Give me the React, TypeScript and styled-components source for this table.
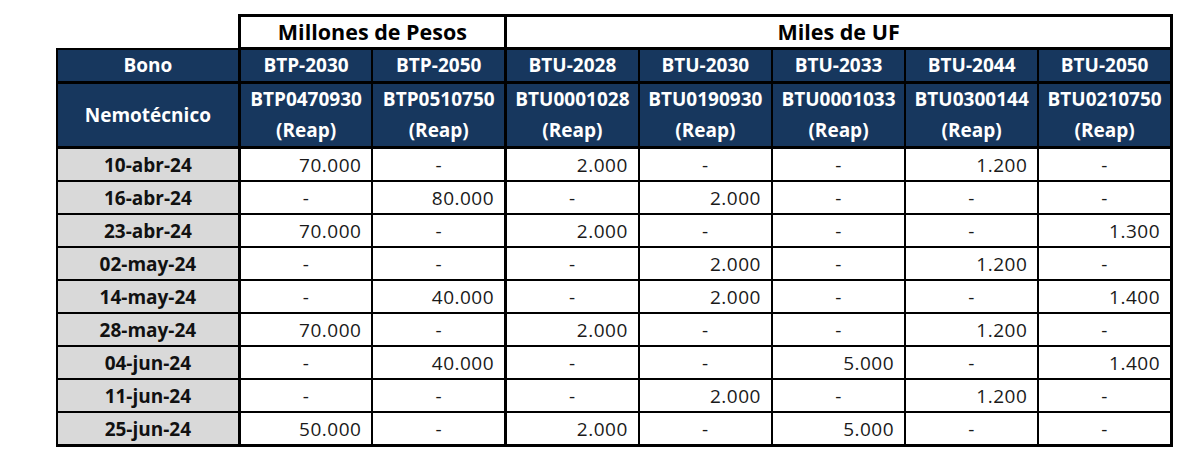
import React from "react";
import styled, { createGlobalStyle } from "styled-components";

const GlobalStyle = createGlobalStyle`
  html, body {
    margin: 0;
    padding: 0;
    background: #ffffff;
  }
  body {
    font-family: "Open Sans", "Liberation Sans", sans-serif;
  }
`;

const BLUE = "#17375e";
const GREY = "#d9d9d9";

const Page = styled.div`
  width: 1198px;
  height: 471px;
  padding: 14px 0 0 56px;
  box-sizing: border-box;
  background: #fff;
`;

const Table = styled.table`
  border-collapse: collapse;
  table-layout: fixed;
  width: 1117px;
  font-family: "Open Sans", "Liberation Sans", sans-serif;
`;

const BlankCell = styled.td`
  border: none;
  background: #fff;
  height: 30px;
  padding: 0;
`;

const GroupCell = styled.th`
  height: 30px;
  padding: 0;
  background: #fff;
  color: #000;
  font-size: 21.5px;
  font-weight: 700;
  text-align: center;
  border: 3px solid #000;
  line-height: 30px;
`;

const HeadCell = styled.th<{ $tall?: boolean; $thickRight?: boolean }>`
  height: ${(p) => (p.$tall ? "57px" : "31px")};
  padding: 0;
  background: ${BLUE};
  color: #fff;
  font-size: 19px;
  font-weight: 700;
  text-align: center;
  vertical-align: middle;
  line-height: 31px;
  border-top: 2px solid #000;
  border-bottom: 3px solid #000;
  border-left: 2px solid #000;
  border-right: ${(p) => (p.$thickRight ? "3px" : "2px")} solid #000;
  white-space: nowrap;
`;

const DateCell = styled.td<{ $last?: boolean }>`
  height: 31px;
  padding: 0;
  background: ${GREY};
  color: #111;
  font-size: 19px;
  font-weight: 700;
  text-align: center;
  border-left: 2px solid #000;
  border-right: 3px solid #000;
  border-top: 2px solid #000;
  border-bottom: ${(p) => (p.$last ? "3px" : "2px")} solid #000;
`;

const ValueCell = styled.td<{ $dash: boolean; $thickRight?: boolean; $last?: boolean; $edge?: boolean }>`
  height: 31px;
  padding: 0 10px 0 0;
  background: #fff;
  color: #1a1a1a;
  font-size: 19px;
  font-weight: 400;
  letter-spacing: 0.5px;
  text-align: ${(p) => (p.$dash ? "center" : "right")};
  padding-left: ${(p) => (p.$dash ? "10px" : "0")};
  border-top: 2px solid #000;
  border-bottom: ${(p) => (p.$last ? "3px" : "2px")} solid #000;
  border-left: 2px solid #000;
  border-right: ${(p) => (p.$thickRight || p.$edge ? "3px" : "2px")} solid #000;
`;

const bonos = ["BTP-2030", "BTP-2050", "BTU-2028", "BTU-2030", "BTU-2033", "BTU-2044", "BTU-2050"];
const nemos = [
  "BTP0470930",
  "BTP0510750",
  "BTU0001028",
  "BTU0190930",
  "BTU0001033",
  "BTU0300144",
  "BTU0210750",
];

const rows: [string, string[]][] = [
  ["10-abr-24", ["70.000", "-", "2.000", "-", "-", "1.200", "-"]],
  ["16-abr-24", ["-", "80.000", "-", "2.000", "-", "-", "-"]],
  ["23-abr-24", ["70.000", "-", "2.000", "-", "-", "-", "1.300"]],
  ["02-may-24", ["-", "-", "-", "2.000", "-", "1.200", "-"]],
  ["14-may-24", ["-", "40.000", "-", "2.000", "-", "-", "1.400"]],
  ["28-may-24", ["70.000", "-", "2.000", "-", "-", "1.200", "-"]],
  ["04-jun-24", ["-", "40.000", "-", "-", "5.000", "-", "1.400"]],
  ["11-jun-24", ["-", "-", "-", "2.000", "-", "1.200", "-"]],
  ["25-jun-24", ["50.000", "-", "2.000", "-", "5.000", "-", "-"]],
];

export default function App() {
  return (
    <Page>
      <GlobalStyle />
      <Table>
        <colgroup>
          <col style={{ width: 182 }} />
          {bonos.map((b) => (
            <col key={b} style={{ width: 133 }} />
          ))}
        </colgroup>
        <thead>
          <tr>
            <BlankCell />
            <GroupCell colSpan={2}>Millones de Pesos</GroupCell>
            <GroupCell colSpan={5}>Miles de UF</GroupCell>
          </tr>
          <tr>
            <HeadCell $thickRight>Bono</HeadCell>
            {bonos.map((b, i) => (
              <HeadCell key={b} $thickRight={i === 1 || i === 6}>
                {b}
              </HeadCell>
            ))}
          </tr>
          <tr>
            <HeadCell $tall $thickRight>
              Nemotécnico
            </HeadCell>
            {nemos.map((n, i) => (
              <HeadCell key={n} $tall $thickRight={i === 1 || i === 6}>
                {n}
                <br />
                (Reap)
              </HeadCell>
            ))}
          </tr>
        </thead>
        <tbody>
          {rows.map(([date, vals], r) => (
            <tr key={date}>
              <DateCell $last={r === rows.length - 1}>{date}</DateCell>
              {vals.map((v, i) => (
                <ValueCell
                  key={i}
                  $dash={v === "-"}
                  $thickRight={i === 1}
                  $edge={i === 6}
                  $last={r === rows.length - 1}
                >
                  {v}
                </ValueCell>
              ))}
            </tr>
          ))}
        </tbody>
      </Table>
    </Page>
  );
}
